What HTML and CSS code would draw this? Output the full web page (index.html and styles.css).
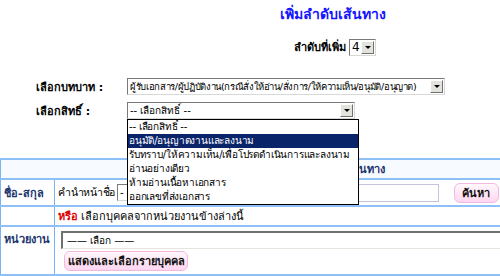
FILE: index.html
```html
<!DOCTYPE html>
<html lang="th">
<head>
    <meta charset="UTF-8">
    <title>เพิ่มลำดับเส้นทาง</title>
    <link rel="stylesheet" href="styles.css">
</head>
<body>
    <div class="page">
        <h1 class="title">เพิ่มลำดับเส้นทาง</h1>

        <div class="seq">
            <span class="label">ลำดับที่เพิ่ม</span>
            <div class="combo combo-seq"><span class="value">4</span><span class="arrow"></span></div>
        </div>

        <div class="form">
            <div class="form-row">
                <span class="label">เลือกบทบาท :</span>
                <div class="combo combo-role"><span class="value">ผู้รับเอกสาร/ผู้ปฏิบัติงาน(กรณีสั่งให้อ่าน/สั่งการ/ให้ความเห็น/อนุมัติ/อนุญาต)</span><span class="arrow"></span></div>
            </div>
            <div class="form-row">
                <span class="label">เลือกสิทธิ์ :</span>
                <div class="combo-wrap">
                    <div class="combo combo-right"><span class="value">-- เลือกสิทธิ์ --</span><span class="arrow"></span></div>
                    <ul class="droplist">
                        <li>-- เลือกสิทธิ์ --</li>
                        <li class="selected">อนุมัติ/อนุญาตงานและลงนาม</li>
                        <li>รับทราบ/ให้ความเห็น/เพื่อโปรดดำเนินการและลงนาม</li>
                        <li>อ่านอย่างเดียว</li>
                        <li>ห้ามอ่านเนื้อหาเอกสาร</li>
                        <li>ออกเลขที่ส่งเอกสาร</li>
                    </ul>
                </div>
            </div>
        </div>

        <table class="route">
            <tr class="head">
                <td colspan="2">เลือกบุคคลในเส้นทาง</td>
            </tr>
            <tr class="row-name">
                <th>ชื่อ-สกุล</th>
                <td>
                    <div class="cell-line">
                        <span class="prefix-label">คำนำหน้าชื่อ</span>
                        <div class="combo combo-prefix"><span class="value">- - เลือก - -</span><span class="arrow"></span></div>
                        <span class="name-label">ชื่อ - นามสกุล</span>
                        <input class="text-input" type="text">
                        <button class="pink-btn btn-search" type="button">ค้นหา</button>
                    </div>
                </td>
            </tr>
            <tr class="row-or">
                <th></th>
                <td><b class="or">หรือ</b> เลือกบุคคลจากหน่วยงานข้างล่างนี้</td>
            </tr>
            <tr class="row-unit">
                <th>หน่วยงาน</th>
                <td>
                    <div class="unit-box"><span>—— เลือก ——</span></div>
                    <button class="pink-btn btn-show" type="button">แสดงและเลือกรายบุคคล</button>
                </td>
            </tr>
        </table>
    </div>
</body>
</html>
```

FILE: styles.css
```css
body {
    margin: 0;
    font-family: Tahoma, "DejaVu Sans", "Noto Sans", sans-serif;
    font-size: 11px;
    color: #000;
    background: #fff;
    overflow: hidden;
}
.page {
    width: 666px;
}
.title {
    margin: 5px 0 0;
    font-size: 14px;
    color: #1414ff;
    text-align: center;
    line-height: 18px;
}
.seq {
    display: flex;
    justify-content: center;
    align-items: center;
    gap: 3px;
    margin-top: 15px;
    padding-left: 4px;
}
.label {
    font-weight: bold;
    white-space: nowrap;
}
.combo {
    display: flex;
    align-items: center;
    height: 17px;
    box-sizing: border-box;
    border: 1px solid #7a7a7a;
    border-right-color: #d8d8d8;
    border-bottom-color: #d8d8d8;
    background: #fff;
    white-space: nowrap;
    overflow: hidden;
    font-size: 10px;
    flex: none;
}
.combo .value {
    flex: 1;
    padding-left: 2px;
    overflow: hidden;
}
.combo .arrow {
    width: 13px;
    height: 13px;
    margin-right: 1px;
    box-sizing: border-box;
    background: #e4e2dc;
    border: 1px solid;
    border-color: #fff #707070 #707070 #fff;
    position: relative;
    flex: none;
}
.combo .arrow::after {
    content: "";
    position: absolute;
    left: 3px;
    top: 4px;
    border-left: 3px solid transparent;
    border-right: 3px solid transparent;
    border-top: 3px solid #000;
}
.combo-seq {
    width: 27px;
    font-size: 12px;
}
.form {
    padding-left: 36px;
    margin-top: 22px;
}
.form-row {
    display: flex;
    align-items: center;
    height: 17px;
    margin-bottom: 7px;
}
.form-row .label {
    width: 91px;
}
.combo-role {
    width: 318px;
    font-size: 9.5px;
    letter-spacing: -0.35px;
}
.combo-wrap {
    position: relative;
}
.combo-right {
    width: 228px;
}
.droplist {
    position: absolute;
    left: 0;
    top: 17px;
    width: 230px;
    margin: 0;
    padding: 0;
    list-style: none;
    background: #fff;
    border: 1px solid #000;
    font-size: 10px;
    letter-spacing: -0.2px;
    z-index: 2;
}
.droplist li {
    height: 14px;
    line-height: 14px;
    padding-left: 1px;
    white-space: nowrap;
}
.droplist .selected {
    background: #0a246a;
    color: #fff;
}
.route {
    width: 666px;
    margin-top: 39px;
    border-collapse: collapse;
    border-left: 1px solid #7ab4f4;
}
.route tr {
    border-top: 2px solid #8cc0f6;
}
.route tr:last-child {
    border-bottom: 2px solid #8cc0f6;
}
.route th {
    width: 50px;
    padding: 3px 0 0 3px;
    text-align: left;
    vertical-align: top;
    color: #1b356e;
    border-right: 1px solid #7ab4f4;
}
.route td {
    padding: 0 3px;
}
.head td {
    height: 16px;
    text-align: center;
    font-weight: bold;
    color: #1b356e;
    background: #f7faff;
}
.row-name th {
    vertical-align: middle;
    padding-top: 0;
}
.cell-line {
    display: flex;
    align-items: center;
    height: 25px;
}
.prefix-label {
    flex: none;
    margin-right: 2px;
    white-space: nowrap;
    font-size: 10.5px;
    letter-spacing: -0.3px;
}
.combo-prefix {
    width: 80px;
}
.name-label {
    width: 159px;
    padding-left: 8px;
    box-sizing: border-box;
    flex: none;
    white-space: nowrap;
}
.text-input {
    flex: none;
    width: 83px;
    height: 18px;
    box-sizing: border-box;
    margin: 0;
    padding: 0;
    border: 1px solid #c6c2dc;
    background: #fff;
}
.pink-btn {
    font-family: inherit;
    font-size: 11px;
    font-weight: bold;
    color: #111;
    padding: 0;
    white-space: nowrap;
    background: linear-gradient(#fff8fc, #ffd6f0);
    border: 1px solid #f2b8de;
    border-radius: 6px;
    cursor: pointer;
    flex: none;
}
.btn-search {
    width: 45px;
    height: 20px;
    margin-left: 15px;
}
.row-or td {
    height: 18px;
}
.or {
    color: #e00000;
}
.row-unit th {
    height: 44px;
}
.row-unit td {
    vertical-align: top;
    padding-top: 4px;
}
.unit-box {
    height: 18px;
    box-sizing: border-box;
    border-top: 2px solid #707070;
    border-left: 2px solid #707070;
    border-bottom: 1px solid #e6e4de;
    display: flex;
    align-items: center;
    padding-left: 4px;
    margin-left: 3px;
    font-size: 10px;
}
.btn-show {
    display: block;
    width: 124px;
    height: 20px;
    margin: 2px 0 0 6px;
}
```
